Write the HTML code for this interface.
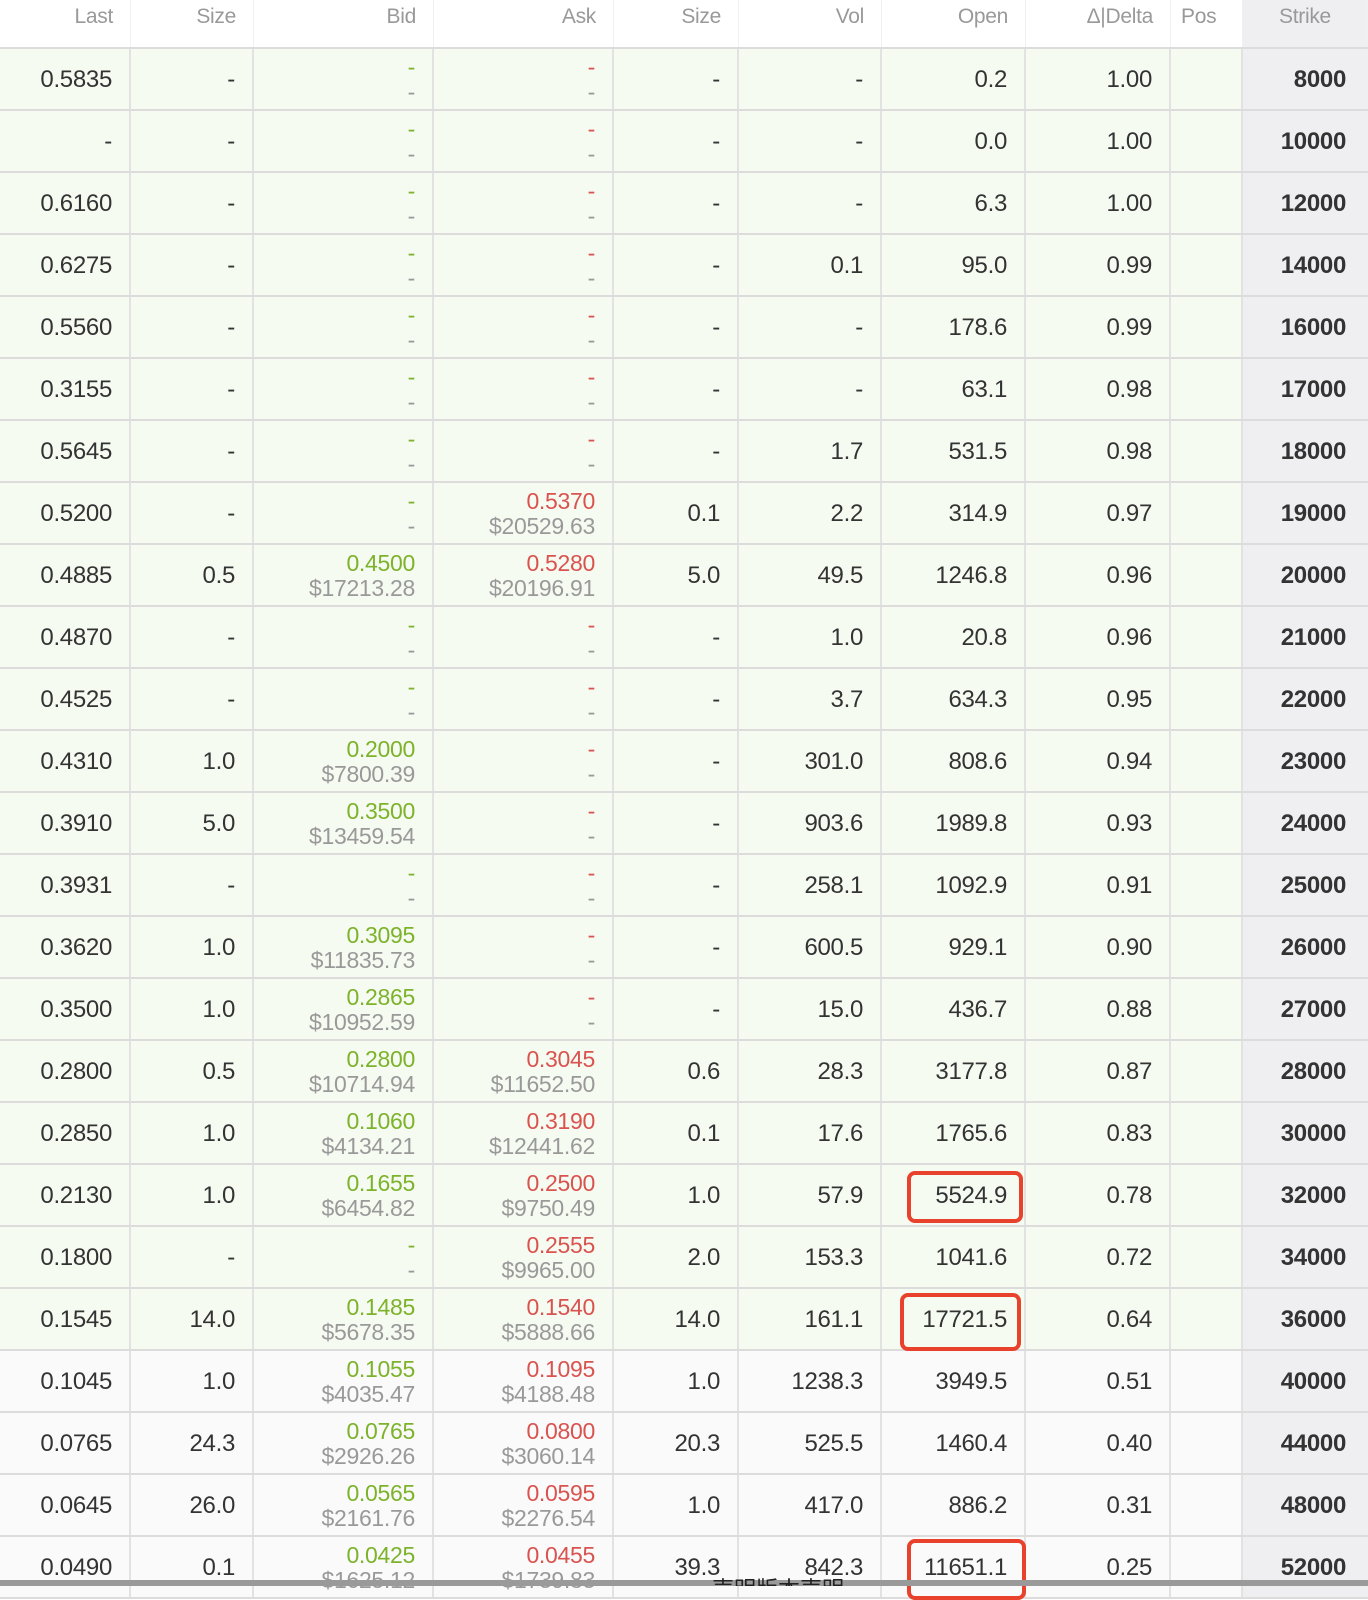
<!DOCTYPE html>
<html><head><meta charset="utf-8"><style>
body{margin:0;width:1368px;height:1586px;overflow:hidden;background:#fff;font-family:"Liberation Sans","Noto Sans CJK SC",sans-serif;position:relative}
.r{display:flex;height:62px;box-sizing:border-box;border-bottom:2px solid #dcdcdc;background:#f6fbf2}
.r.w{background:#fafafa}
.h{display:flex;height:48.6px;box-sizing:border-box;border-bottom:2px solid #dcdcdc;background:#fff}
.c{box-sizing:border-box;border-right:2px solid #e2e2e2;text-align:right;padding-right:17px;font-size:24px;color:#333;line-height:62px;white-space:nowrap;letter-spacing:-0.3px}
.h .c{color:#999;font-size:21px;line-height:34px;border-right:1px solid #f0f0f0}
.c1{width:131px}.c2{width:123px}.c3{width:180px}.c4{width:180px}.c5{width:125px}.c6{width:143px}.c7{width:144px}.c8{width:145px}.c9{width:72px;text-align:left;padding-left:10px}.c10{width:125px;background:#efeff1;border-right:none;font-weight:bold;padding-right:22px;text-align:right}
.h .c10{font-weight:normal;text-align:center;padding-right:0}
.d{line-height:25px;padding-top:6px;font-size:23px}
.g{color:#7cb32a;display:block}.rd{color:#d9534f;display:block}.s{color:#999;display:block}
.box{position:absolute;border:4px solid #e8412c;border-radius:8px;box-sizing:border-box}
.bar{position:absolute;left:0;top:1580px;width:1368px;height:6px;background:#9a9a9a;overflow:hidden}
.bt{position:absolute;left:712px;top:1577px;height:9px;overflow:hidden;font-size:22px;line-height:26px;color:#222}
</style></head><body>
<div class="h"><div class="c c1">Last</div><div class="c c2">Size</div><div class="c c3">Bid</div><div class="c c4">Ask</div><div class="c c5">Size</div><div class="c c6">Vol</div><div class="c c7">Open</div><div class="c c8">Δ|Delta</div><div class="c c9">Pos</div><div class="c c10">Strike</div></div>

<div class="r"><div class="c c1">0.5835</div><div class="c c2">-</div><div class="c c3 d"><span class="g">-</span><span class="s">-</span></div><div class="c c4 d"><span class="rd">-</span><span class="s">-</span></div><div class="c c5">-</div><div class="c c6">-</div><div class="c c7">0.2</div><div class="c c8">1.00</div><div class="c c9"></div><div class="c c10">8000</div></div>
<div class="r"><div class="c c1">-</div><div class="c c2">-</div><div class="c c3 d"><span class="g">-</span><span class="s">-</span></div><div class="c c4 d"><span class="rd">-</span><span class="s">-</span></div><div class="c c5">-</div><div class="c c6">-</div><div class="c c7">0.0</div><div class="c c8">1.00</div><div class="c c9"></div><div class="c c10">10000</div></div>
<div class="r"><div class="c c1">0.6160</div><div class="c c2">-</div><div class="c c3 d"><span class="g">-</span><span class="s">-</span></div><div class="c c4 d"><span class="rd">-</span><span class="s">-</span></div><div class="c c5">-</div><div class="c c6">-</div><div class="c c7">6.3</div><div class="c c8">1.00</div><div class="c c9"></div><div class="c c10">12000</div></div>
<div class="r"><div class="c c1">0.6275</div><div class="c c2">-</div><div class="c c3 d"><span class="g">-</span><span class="s">-</span></div><div class="c c4 d"><span class="rd">-</span><span class="s">-</span></div><div class="c c5">-</div><div class="c c6">0.1</div><div class="c c7">95.0</div><div class="c c8">0.99</div><div class="c c9"></div><div class="c c10">14000</div></div>
<div class="r"><div class="c c1">0.5560</div><div class="c c2">-</div><div class="c c3 d"><span class="g">-</span><span class="s">-</span></div><div class="c c4 d"><span class="rd">-</span><span class="s">-</span></div><div class="c c5">-</div><div class="c c6">-</div><div class="c c7">178.6</div><div class="c c8">0.99</div><div class="c c9"></div><div class="c c10">16000</div></div>
<div class="r"><div class="c c1">0.3155</div><div class="c c2">-</div><div class="c c3 d"><span class="g">-</span><span class="s">-</span></div><div class="c c4 d"><span class="rd">-</span><span class="s">-</span></div><div class="c c5">-</div><div class="c c6">-</div><div class="c c7">63.1</div><div class="c c8">0.98</div><div class="c c9"></div><div class="c c10">17000</div></div>
<div class="r"><div class="c c1">0.5645</div><div class="c c2">-</div><div class="c c3 d"><span class="g">-</span><span class="s">-</span></div><div class="c c4 d"><span class="rd">-</span><span class="s">-</span></div><div class="c c5">-</div><div class="c c6">1.7</div><div class="c c7">531.5</div><div class="c c8">0.98</div><div class="c c9"></div><div class="c c10">18000</div></div>
<div class="r"><div class="c c1">0.5200</div><div class="c c2">-</div><div class="c c3 d"><span class="g">-</span><span class="s">-</span></div><div class="c c4 d"><span class="rd">0.5370</span><span class="s">$20529.63</span></div><div class="c c5">0.1</div><div class="c c6">2.2</div><div class="c c7">314.9</div><div class="c c8">0.97</div><div class="c c9"></div><div class="c c10">19000</div></div>
<div class="r"><div class="c c1">0.4885</div><div class="c c2">0.5</div><div class="c c3 d"><span class="g">0.4500</span><span class="s">$17213.28</span></div><div class="c c4 d"><span class="rd">0.5280</span><span class="s">$20196.91</span></div><div class="c c5">5.0</div><div class="c c6">49.5</div><div class="c c7">1246.8</div><div class="c c8">0.96</div><div class="c c9"></div><div class="c c10">20000</div></div>
<div class="r"><div class="c c1">0.4870</div><div class="c c2">-</div><div class="c c3 d"><span class="g">-</span><span class="s">-</span></div><div class="c c4 d"><span class="rd">-</span><span class="s">-</span></div><div class="c c5">-</div><div class="c c6">1.0</div><div class="c c7">20.8</div><div class="c c8">0.96</div><div class="c c9"></div><div class="c c10">21000</div></div>
<div class="r"><div class="c c1">0.4525</div><div class="c c2">-</div><div class="c c3 d"><span class="g">-</span><span class="s">-</span></div><div class="c c4 d"><span class="rd">-</span><span class="s">-</span></div><div class="c c5">-</div><div class="c c6">3.7</div><div class="c c7">634.3</div><div class="c c8">0.95</div><div class="c c9"></div><div class="c c10">22000</div></div>
<div class="r"><div class="c c1">0.4310</div><div class="c c2">1.0</div><div class="c c3 d"><span class="g">0.2000</span><span class="s">$7800.39</span></div><div class="c c4 d"><span class="rd">-</span><span class="s">-</span></div><div class="c c5">-</div><div class="c c6">301.0</div><div class="c c7">808.6</div><div class="c c8">0.94</div><div class="c c9"></div><div class="c c10">23000</div></div>
<div class="r"><div class="c c1">0.3910</div><div class="c c2">5.0</div><div class="c c3 d"><span class="g">0.3500</span><span class="s">$13459.54</span></div><div class="c c4 d"><span class="rd">-</span><span class="s">-</span></div><div class="c c5">-</div><div class="c c6">903.6</div><div class="c c7">1989.8</div><div class="c c8">0.93</div><div class="c c9"></div><div class="c c10">24000</div></div>
<div class="r"><div class="c c1">0.3931</div><div class="c c2">-</div><div class="c c3 d"><span class="g">-</span><span class="s">-</span></div><div class="c c4 d"><span class="rd">-</span><span class="s">-</span></div><div class="c c5">-</div><div class="c c6">258.1</div><div class="c c7">1092.9</div><div class="c c8">0.91</div><div class="c c9"></div><div class="c c10">25000</div></div>
<div class="r"><div class="c c1">0.3620</div><div class="c c2">1.0</div><div class="c c3 d"><span class="g">0.3095</span><span class="s">$11835.73</span></div><div class="c c4 d"><span class="rd">-</span><span class="s">-</span></div><div class="c c5">-</div><div class="c c6">600.5</div><div class="c c7">929.1</div><div class="c c8">0.90</div><div class="c c9"></div><div class="c c10">26000</div></div>
<div class="r"><div class="c c1">0.3500</div><div class="c c2">1.0</div><div class="c c3 d"><span class="g">0.2865</span><span class="s">$10952.59</span></div><div class="c c4 d"><span class="rd">-</span><span class="s">-</span></div><div class="c c5">-</div><div class="c c6">15.0</div><div class="c c7">436.7</div><div class="c c8">0.88</div><div class="c c9"></div><div class="c c10">27000</div></div>
<div class="r"><div class="c c1">0.2800</div><div class="c c2">0.5</div><div class="c c3 d"><span class="g">0.2800</span><span class="s">$10714.94</span></div><div class="c c4 d"><span class="rd">0.3045</span><span class="s">$11652.50</span></div><div class="c c5">0.6</div><div class="c c6">28.3</div><div class="c c7">3177.8</div><div class="c c8">0.87</div><div class="c c9"></div><div class="c c10">28000</div></div>
<div class="r"><div class="c c1">0.2850</div><div class="c c2">1.0</div><div class="c c3 d"><span class="g">0.1060</span><span class="s">$4134.21</span></div><div class="c c4 d"><span class="rd">0.3190</span><span class="s">$12441.62</span></div><div class="c c5">0.1</div><div class="c c6">17.6</div><div class="c c7">1765.6</div><div class="c c8">0.83</div><div class="c c9"></div><div class="c c10">30000</div></div>
<div class="r"><div class="c c1">0.2130</div><div class="c c2">1.0</div><div class="c c3 d"><span class="g">0.1655</span><span class="s">$6454.82</span></div><div class="c c4 d"><span class="rd">0.2500</span><span class="s">$9750.49</span></div><div class="c c5">1.0</div><div class="c c6">57.9</div><div class="c c7">5524.9</div><div class="c c8">0.78</div><div class="c c9"></div><div class="c c10">32000</div></div>
<div class="r"><div class="c c1">0.1800</div><div class="c c2">-</div><div class="c c3 d"><span class="g">-</span><span class="s">-</span></div><div class="c c4 d"><span class="rd">0.2555</span><span class="s">$9965.00</span></div><div class="c c5">2.0</div><div class="c c6">153.3</div><div class="c c7">1041.6</div><div class="c c8">0.72</div><div class="c c9"></div><div class="c c10">34000</div></div>
<div class="r"><div class="c c1">0.1545</div><div class="c c2">14.0</div><div class="c c3 d"><span class="g">0.1485</span><span class="s">$5678.35</span></div><div class="c c4 d"><span class="rd">0.1540</span><span class="s">$5888.66</span></div><div class="c c5">14.0</div><div class="c c6">161.1</div><div class="c c7">17721.5</div><div class="c c8">0.64</div><div class="c c9"></div><div class="c c10">36000</div></div>
<div class="r w"><div class="c c1">0.1045</div><div class="c c2">1.0</div><div class="c c3 d"><span class="g">0.1055</span><span class="s">$4035.47</span></div><div class="c c4 d"><span class="rd">0.1095</span><span class="s">$4188.48</span></div><div class="c c5">1.0</div><div class="c c6">1238.3</div><div class="c c7">3949.5</div><div class="c c8">0.51</div><div class="c c9"></div><div class="c c10">40000</div></div>
<div class="r w"><div class="c c1">0.0765</div><div class="c c2">24.3</div><div class="c c3 d"><span class="g">0.0765</span><span class="s">$2926.26</span></div><div class="c c4 d"><span class="rd">0.0800</span><span class="s">$3060.14</span></div><div class="c c5">20.3</div><div class="c c6">525.5</div><div class="c c7">1460.4</div><div class="c c8">0.40</div><div class="c c9"></div><div class="c c10">44000</div></div>
<div class="r w"><div class="c c1">0.0645</div><div class="c c2">26.0</div><div class="c c3 d"><span class="g">0.0565</span><span class="s">$2161.76</span></div><div class="c c4 d"><span class="rd">0.0595</span><span class="s">$2276.54</span></div><div class="c c5">1.0</div><div class="c c6">417.0</div><div class="c c7">886.2</div><div class="c c8">0.31</div><div class="c c9"></div><div class="c c10">48000</div></div>
<div class="r w"><div class="c c1">0.0490</div><div class="c c2">0.1</div><div class="c c3 d"><span class="g">0.0425</span><span class="s">$1625.12</span></div><div class="c c4 d"><span class="rd">0.0455</span><span class="s">$1739.83</span></div><div class="c c5">39.3</div><div class="c c6">842.3</div><div class="c c7">11651.1</div><div class="c c8">0.25</div><div class="c c9"></div><div class="c c10">52000</div></div>

<div class="box" style="left:907px;top:1171px;width:116px;height:52px"></div>
<div class="box" style="left:900px;top:1293px;width:121px;height:58px"></div>
<div class="box" style="left:907px;top:1539px;width:119px;height:61px"></div>
<div class="bar"></div>
<div class="bt">声明版本声明</div>
</body></html>
